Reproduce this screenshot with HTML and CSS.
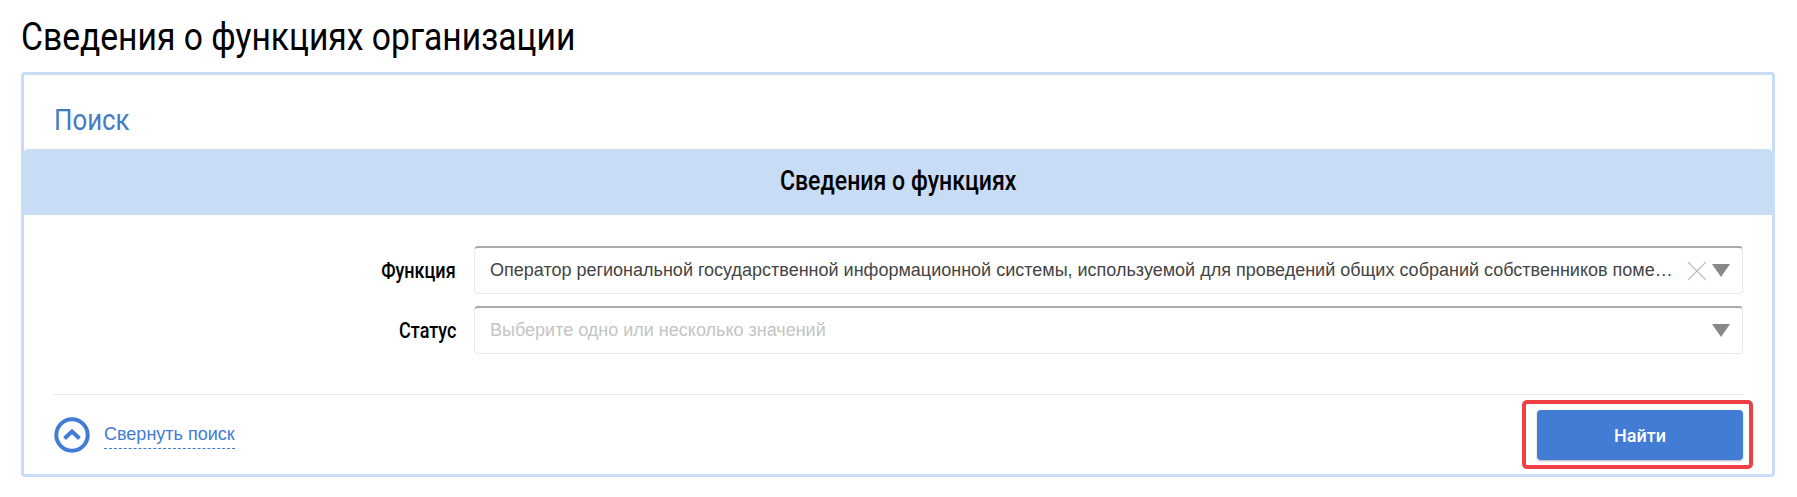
FILE: index.html
```html
<!DOCTYPE html>
<html lang="ru">
<head>
    <meta charset="UTF-8">
    <title>Сведения о функциях организации</title>
    <link rel="stylesheet" href="styles.css">
</head>
<body>
    <h1 class="page-title"><span class="narrow">Сведения о функциях организации</span></h1>

    <section class="panel">
        <h2 class="panel-title"><span class="narrow">Поиск</span></h2>
        <div class="section-head"><span class="narrow">Сведения о функциях</span></div>

        <div class="form">
            <div class="form-row">
                <label class="form-label"><span class="narrow narrow-right">Функция</span></label>
                <div class="select">
                    <span class="select-value">Оператор региональной государственной информационной системы, используемой для проведений общих собраний собственников поме…</span>
                    <svg class="select-clear" width="20" height="20" viewBox="0 0 20 20"><path d="M1 1 19 19M19 1 1 19" stroke="#b9c0c8" stroke-width="1.2" fill="none"/></svg>
                    <span class="select-arrow"></span>
                </div>
            </div>
            <div class="form-row">
                <label class="form-label"><span class="narrow narrow-right">Статус</span></label>
                <div class="select">
                    <span class="select-value placeholder">Выберите одно или несколько значений</span>
                    <span class="select-arrow"></span>
                </div>
            </div>
        </div>

        <div class="panel-footer">
            <a class="collapse-link">
                <svg width="36" height="36" viewBox="0 0 36 36"><circle cx="18" cy="18" r="15.7" stroke="#427cd4" stroke-width="4" fill="none"/><path d="M10.5 21.5 18 14.5 25.5 21.5" stroke="#427cd4" stroke-width="4" fill="none"/></svg>
                <span class="collapse-text">Свернуть поиск</span>
            </a>
            <div class="highlight">
                <button class="find-button">Найти</button>
            </div>
        </div>
    </section>
</body>
</html>
```

FILE: styles.css
```css
/* Base */
body {
    margin: 0;
    background: #fff;
    color: #000;
    font-family: 'Roboto', sans-serif;
    overflow: hidden;
}

/* Roboto has no condensed cut here, so squeeze the headings */
.narrow {
    display: inline-block;
    transform: scaleX(0.85);
    transform-origin: left center;
    white-space: nowrap;
}

.narrow-right {
    transform-origin: right center;
}

.page-title {
    margin: 0;
    padding: 13px 0 0 21px;
    height: 72px;
    box-sizing: border-box;
    font-size: 39.6px;
    line-height: 48px;
    font-weight: 400;
}

.panel {
    margin: 0 22px 0 21px;
    height: 405px;
    box-sizing: border-box;
    border: 3px solid #c8dcf5;
    border-radius: 4px;
}

.panel-title {
    margin: 0;
    padding-left: 30px;
    height: 74px;
    box-sizing: border-box;
    padding-top: 25px;
    font-size: 30.4px;
    line-height: 40px;
    font-weight: 400;
    color: #427cc4;
}

.section-head {
    height: 66px;
    background: #c8dcf5;
    border-radius: 4px 4px 0 0;
    text-align: center;
    font-size: 27.2px;
    line-height: 65px;
    font-weight: 500;
}

.section-head .narrow {
    transform-origin: center center;
}

/* Form */
.form {
    padding: 31px 29px 0 0;
    display: flex;
    flex-direction: column;
    gap: 12px;
}

.form-row {
    display: flex;
    align-items: center;
    gap: 18px;
}

.form-label {
    width: 432px;
    text-align: right;
    font-size: 21.2px;
    font-weight: 500;
}

.select {
    flex: 1;
    min-width: 0;
    height: 48px;
    box-sizing: border-box;
    display: flex;
    align-items: center;
    padding: 0 12px 0 15px;
    border: 1px solid #e6e9ed;
    border-top: 2px solid #a9a9a9;
    border-radius: 4px;
}

.select-value {
    flex: 1;
    min-width: 0;
    font-family: 'Liberation Sans', sans-serif;
    font-size: 18px;
    color: #444;
    white-space: nowrap;
}

.placeholder {
    color: #c4c4c4;
}

.select-clear {
    margin-left: 14px;
    flex-shrink: 0;
}

.select-arrow {
    margin-left: 5px;
    flex-shrink: 0;
    width: 0;
    height: 0;
    border-left: 9px solid transparent;
    border-right: 9px solid transparent;
    border-top: 13px solid #888;
}

/* Footer */
.panel-footer {
    margin: 40px 28px 0 30px;
    border-top: 1px solid #e4e6e9;
    display: flex;
    justify-content: space-between;
    align-items: flex-start;
    padding-top: 5px;
}

.collapse-link {
    display: flex;
    align-items: center;
    gap: 14px;
    margin-top: 17px;
    color: #427cd4;
}

.collapse-text {
    font-family: 'Liberation Sans', sans-serif;
    font-size: 18px;
    line-height: 24px;
    padding-bottom: 2px;
    border-bottom: 1px dashed #427cd4;
}

.highlight {
    margin-right: -9px;
    padding: 6px 6px 5px 11px;
    border: 4px solid #ee3f45;
    border-radius: 5px;
}

.find-button {
    display: block;
    width: 206px;
    height: 50px;
    border: 0;
    border-radius: 4px;
    background: #427cd4;
    box-shadow: 0 1px 2px rgba(0, 0, 0, 0.3);
    color: #fff;
    font-family: 'Roboto', sans-serif;
    font-size: 18px;
    font-weight: 500;
}
```
